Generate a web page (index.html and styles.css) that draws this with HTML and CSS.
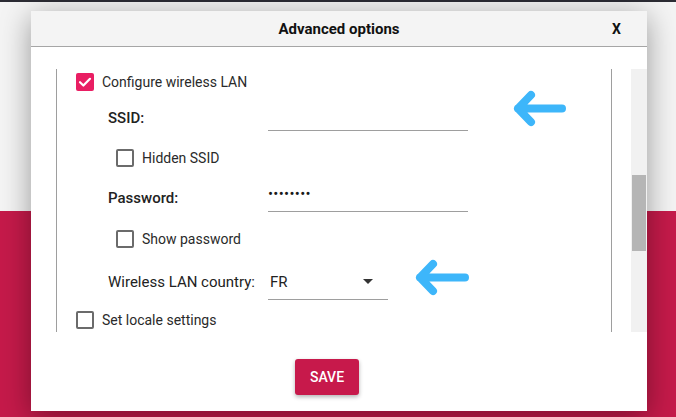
FILE: index.html
```html
<!DOCTYPE html>
<html>
<head>
<meta charset="utf-8">
<link rel="stylesheet" href="styles.css">
</head>
<body>
<div class="page">
  <div class="topbar"></div>
  <div class="hero"></div>
  <div class="band"></div>
</div>

<div class="dialog">
  <div class="dlg-head">
    <span></span>
    <span class="dlg-title">Advanced options</span>
    <span class="dlg-close">X</span>
  </div>
  <div class="dlg-body">
    <div class="scroll-content">
      <div class="check-row">
        <span class="cb cb-on">
          <svg width="18" height="18" viewBox="0 0 18 18"><path d="M4 9.2 L7.4 12.5 L14 5.8" fill="none" stroke="#fff" stroke-width="2.2" stroke-linecap="round" stroke-linejoin="round"/></svg>
        </span>
        <span class="cb-label">Configure wireless LAN</span>
      </div>
      <div class="field f-ssid">
        <span class="field-label strong">SSID:</span>
        <span class="field-input"></span>
      </div>
      <div class="check-row sub r-hidden">
        <span class="cb"></span>
        <span class="cb-label">Hidden SSID</span>
      </div>
      <div class="field f-pass">
        <span class="field-label strong">Password:</span>
        <span class="field-input"><span class="dots">••••••••</span></span>
      </div>
      <div class="check-row sub r-show">
        <span class="cb"></span>
        <span class="cb-label">Show password</span>
      </div>
      <div class="field f-country">
        <span class="field-label">Wireless LAN country:</span>
        <span class="field-select"><span class="sel-val">FR</span><span class="caret"></span></span>
      </div>
      <div class="check-row r-locale">
        <span class="cb"></span>
        <span class="cb-label">Set locale settings</span>
      </div>
    </div>
    <div class="gutter"></div>
    <div class="scrollbar"><div class="thumb"></div></div>
  </div>
  <div class="dlg-foot">
    <button class="save">SAVE</button>
  </div>

  <svg class="arrow arrow-1" width="54" height="37" viewBox="0 0 54 37"><path d="M50 18.5 H6 M19 5 L6 18.5 L19 32" fill="none" stroke="#3db6fa" stroke-width="8" stroke-linecap="round" stroke-linejoin="round"/></svg>
  <svg class="arrow arrow-2" width="55" height="37" viewBox="0 0 55 37"><path d="M51 18.5 H6 M19 5 L6 18.5 L19 32" fill="none" stroke="#3db6fa" stroke-width="8" stroke-linecap="round" stroke-linejoin="round"/></svg>
</div>
</body>
</html>
```

FILE: styles.css
```css
html, body {
  margin: 0;
  padding: 0;
  height: 100%;
  overflow: hidden;
}
body {
  font-family: Roboto, "Liberation Sans", sans-serif;
  color: #222;
}
.page {
  display: flex;
  flex-direction: column;
  height: 417px;
}
.topbar {
  height: 2px;
  background: #2c2c34;
}
.hero {
  height: 209px;
  background: #f4f4f4;
}
.band {
  flex: 1;
  background: #c51a4a;
}

.dialog {
  position: absolute;
  left: 31px;
  top: 11px;
  width: 616px;
  height: 400px;
  background: #fff;
  display: flex;
  flex-direction: column;
  box-shadow: 0 6px 28px rgba(0, 0, 0, 0.38);
}
.dlg-head {
  height: 35px;
  border-bottom: 1px solid #a6a6a6;
  background: #f4f4f4;
  display: grid;
  grid-template-columns: 1fr auto 1fr;
  align-items: center;
}
.dlg-title {
  font-size: 15px;
  font-weight: 700;
  color: #111;
}
.dlg-close {
  justify-self: end;
  padding-right: 26px;
  font-size: 14px;
  font-weight: 700;
  color: #111;
}

.dlg-body {
  margin-top: 22px;
  height: 263px;
  display: flex;
}
.scroll-content {
  margin-left: 25px;
  border-left: 1px solid #9e9e9e;
  border-right: 1px solid #9e9e9e;
  padding-left: 19px;
  box-sizing: border-box;
  width: 556px;
  overflow: hidden;
  display: flex;
  flex-direction: column;
}
.gutter {
  width: 19px;
}
.scrollbar {
  width: 16px;
  background: #f1f1f1;
  display: flex;
  flex-direction: column;
  align-items: center;
}
.thumb {
  margin-top: 106px;
  width: 14px;
  height: 76px;
  background: #b5b5b5;
}

.check-row {
  display: flex;
  align-items: center;
  gap: 8px;
  height: 26px;
  font-size: 14px;
}
.check-row.sub {
  margin-left: 40px;
  height: 24px;
}
.r-hidden { margin-top: 10px; }
.r-show { margin-top: 11px; }
.r-locale { margin-top: 8px; height: 24px; }

.cb {
  width: 18px;
  height: 18px;
  box-sizing: border-box;
  border: 2px solid #6b6b6b;
  border-radius: 2px;
  flex: none;
}
.cb-on {
  border: none;
  background: #e91e63;
  display: flex;
}
.cb-label {
  color: #2a2a2a;
}

.field {
  display: flex;
  margin-left: 32px;
  height: 36px;
}
.f-ssid { margin-top: 5px; }
.f-pass { margin-top: 10px; }
.f-country { margin-top: 13px; }
.field-label {
  width: 160px;
  align-self: center;
  font-size: 15px;
  color: #222;
}
.field-label.strong {
  font-weight: 500;
}
.field-input {
  width: 200px;
  height: 30px;
  border-bottom: 1px solid #9e9e9e;
  display: flex;
  align-items: flex-start;
}
.f-pass .field-input {
  height: 31px;
}
.dots {
  padding-top: 5px;
  font-size: 15px;
  line-height: 18px;
  letter-spacing: 0.3px;
  color: #1a1a1a;
}
.field-select {
  width: 120px;
  height: 35px;
  border-bottom: 1px solid #9e9e9e;
  display: flex;
  align-items: center;
  justify-content: space-between;
}
.sel-val {
  padding-left: 2px;
  font-size: 15px;
  color: #222;
}
.caret {
  width: 0;
  height: 0;
  border-left: 5px solid transparent;
  border-right: 5px solid transparent;
  border-top: 5px solid #333;
  margin-right: 15px;
}

.dlg-foot {
  padding-top: 27px;
  padding-right: 24px;
  display: flex;
  justify-content: center;
}
.save {
  width: 64px;
  height: 36px;
  border: none;
  border-radius: 3px;
  background: #c7194b;
  color: #fff;
  font-family: Roboto, "Liberation Sans", sans-serif;
  font-size: 14px;
  font-weight: 500;
  box-shadow: 0 2px 4px rgba(0, 0, 0, 0.3);
  padding: 0;
}

.arrow {
  position: absolute;
}
.arrow-1 {
  left: 481px;
  top: 79px;
}
.arrow-2 {
  left: 383px;
  top: 248px;
}
```
